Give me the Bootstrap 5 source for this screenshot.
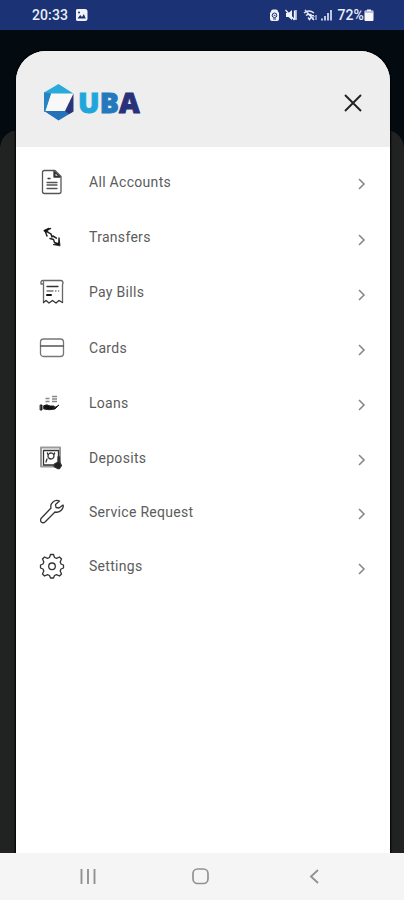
<!DOCTYPE html>
<html lang="en">
<head>
<meta charset="utf-8">
<meta name="viewport" content="width=device-width, initial-scale=1">
<title>UBA Menu</title>
<link rel="stylesheet" href="https://cdn.jsdelivr.net/npm/bootstrap@5.3.0/dist/css/bootstrap.min.css">
<style>
body{font-family:Roboto,"Liberation Sans",sans-serif;background:#202321;letter-spacing:.3px}
.screen{height:900px;background:#202321}
.statusbar{height:30px;background:#1b3274;color:#e9eefb;font-size:14px;font-weight:500;letter-spacing:.1px;padding:0 30px 0 32px}
.backdrop-area{background:radial-gradient(circle at 18px 118px,#202321 17.5px,#030b11 18px) 0 0/18px 118px no-repeat,radial-gradient(circle at 0 118px,#202321 17.5px,#030b11 18px) 100% 0/18px 118px no-repeat,linear-gradient(#030b11 90px,#202321 90px);padding:20.500px 14px 0 16px}
.menu-sheet{border-radius:30px 30px 0 0;background:#fff;box-shadow:0 0 2px 1px #000}
.sheet-head{height:96px;background:#eee;padding:8px 26px 0 27px}
.brand-word{font-family:"Open Sans",sans-serif;font-weight:800;font-size:28.5px;line-height:36px;letter-spacing:.1px;margin:-2px 0 0 4px;-webkit-text-stroke:.9px currentColor}
.c1{color:#1fa7dc}.c2{color:#2478bd}.c3{color:#28317a}
.menu{padding-top:7.900px}
.menu-row{height:55.2px;padding:0 23px 0 22px;background:transparent;color:#5c5c5c;font-size:14px;line-height:20px}
.menu-row:nth-child(n+6){height:54.4px}
.menu-row .label{margin-left:23px}
.menu-row .arrow{margin-top:5px}
.navkeys{height:47px;background:#f5f5f5}
svg{display:block;flex:none}
.ico{fill:none;stroke:#333;stroke-width:1.3;stroke-linejoin:round;stroke-linecap:round}
</style>
</head>
<body>
<div class="screen d-flex flex-column overflow-hidden">
  <header class="statusbar d-flex align-items-center justify-content-between">
    <div class="d-flex align-items-center"><span>20:33</span>
      <svg class="ms-2" width="12" height="12" viewBox="0 0 12 12"><rect x="-.5" width="12" height="12" rx="2.5" fill="#f1f3fb"/><path d="M1.500 9.500 4.200 6 6 8l1.800-3 2 4.500z" fill="#1b3274"/><circle cx="3" cy="3.5" r="1" fill="#1b3274"/></svg>
    </div>
    <div class="d-flex align-items-center">
      <svg width="67" height="14" viewBox="1 0 67 14">
        <path d="M2 3.500Q2 1.500 4 1.500h3q2 0 2 2l1 1.500v6q0 2-2 2H3q-2 0-2-2V5z" fill="#f1f3fb"/><circle cx="5.500" cy="7.300" r="2.300" fill="none" stroke="#1b3274"/><path d="M4.700 7.300h1.700M4 11h3" stroke="#1b3274"/>
        <path d="M17 5h2.500L23 2v10l-3.500-3H17z" fill="#f1f3fb"/><path d="M16.500 2l9 10M25.500 2.500v9M27 2v10" stroke="#f1f3fb" stroke-width="1.300"/>
        <path d="M35 5q5-4 10 0M37 7.500q3-2.500 6 0M39 9.500l1.500 2 1.500-2M36 2l9 10" fill="none" stroke="#e5eafa" stroke-width="1.400"/><path d="M44 12V7m-1.500 1.500L44 7l1.500 1.500M47 7v5" fill="none" stroke="#e5eafa"/>
        <path d="M53 12.500v-2M56 12.500V8M59 12.500V5M62 12.500V2" stroke="#cfd7f0" stroke-width="1.800"/>
      </svg>
      <span>72%</span>
      <svg width="10" height="14" viewBox="0 0 10 14"><path d="M3 2.500V1.500h4v1h1.500q1 0 1 1V12q0 1-1 1h-7q-1 0-1-1V3.500q0-1 1-1z" fill="#f6f7fc"/><path d="M1 4h8" stroke="#8491bd"/></svg>
    </div>
  </header>
  <main class="backdrop-area d-flex flex-column flex-fill">
    <section class="menu-sheet d-flex flex-column flex-fill overflow-hidden">
      <div class="sheet-head d-flex align-items-center justify-content-between">
        <div class="d-flex align-items-center">
          <svg width="31" height="37" viewBox="0 0 31 37"><path d="M15.500 0 30.500 8.500v19L15.500 36.500 1 28V8.500z" fill="#f8f8f8"/><path d="M15.500 0 30.500 9.500H8L2 28 1 27V8.500z" fill="#2aaad8"/><path d="M1 8.500 8 9.500 2 28 1 27z" fill="#2484c3"/><path d="M1 27h21l8.500.5-15 9z" fill="#2472b8"/><path d="M30.500 9.500v18L26 30l-4-3z" fill="#29347b"/></svg>
          <div class="brand-word"><span class="c1">U</span><span class="c2">B</span><span class="c3">A</span></div>
        </div>
        <button class="btn p-0 border-0" aria-label="Close"><svg width="22" height="22" viewBox="0 0 22 22"><path d="M3 3l16 16M19 3 3 19" fill="none" stroke="#222" stroke-width="1.900"/></svg></button>
      </div>
      <nav class="menu d-flex flex-column">
        <a class="menu-row d-flex align-items-center text-decoration-none" href="#"><svg class="ico" width="28" height="28" viewBox="0 0 28 28"><path d="M6.500 2.500H17l6 6v15q0 2-2 2H6.500q-2 0-2-2v-19q0-2 2-2z" stroke="#555"/><path d="M10 10.500h2"/><path d="M9 14.500h10M9 17h10M9 20.500h10" stroke="#555"/><path d="M16 3.500v5.500h6z" fill="#333"/><path d="M17.800 6.500v1h1z" fill="#fff" stroke="#fff" stroke-width=".5"/></svg><span class="label">All Accounts</span><svg class="arrow ms-auto" width="12" height="14" viewBox="0 0 12 14"><path d="M4 2l5 5-5 5" fill="none" stroke="#888" stroke-width="1.600"/></svg></a>
        <a class="menu-row d-flex align-items-center text-decoration-none" href="#"><svg class="ico" width="28" height="28" viewBox="0 0 28 28"><path d="M12.500 5.500L7 7.500l2 5.500M8 8l5 3 1 3M12 15.500l3.500 1 1 3 4 1.500M15 13l4 2.500" stroke="#222" stroke-width="1.500" stroke-dasharray="4 1"/><path d="M6 7.500l5-2.500-.5 2L8 9zM15.500 21.500l5-1.500.5-5.500 1 8z" fill="#111" stroke="#111" stroke-width=".8"/></svg><span class="label">Transfers</span><svg class="arrow ms-auto" width="12" height="14" viewBox="0 0 12 14"><path d="M4 2l5 5-5 5" fill="none" stroke="#888" stroke-width="1.600"/></svg></a>
        <a class="menu-row d-flex align-items-center text-decoration-none" href="#"><svg class="ico" width="28" height="28" viewBox="0 0 28 28"><path d="M5.500 24.500V6H3q-.5-3.500 2-3.500h18q2 0 2 3l-.5 1v18" stroke="#666"/><path d="M5.500 6V3" stroke="#777"/><path d="M5.500 24.500l2.500-2 3 2.500 3.500-2.500 3.500 2.500 3-2.500 3.500 2"/><path d="M9 8.500h11" /><path d="M9 13h6M17.500 13h.5M20.500 13h.2" stroke="#777"/><path d="M9 17h4" stroke="#111" stroke-width="2"/></svg><span class="label">Pay Bills</span><svg class="arrow ms-auto" width="12" height="14" viewBox="0 0 12 14"><path d="M4 2l5 5-5 5" fill="none" stroke="#888" stroke-width="1.600"/></svg></a>
        <a class="menu-row d-flex align-items-center text-decoration-none" href="#"><svg class="ico" width="28" height="28" viewBox="0 0 28 28"><rect x="2.500" y="5" width="23" height="17.500" rx="3" stroke="#777"/><path d="M2.500 12h23" stroke="#555"/></svg><span class="label">Cards</span><svg class="arrow ms-auto" width="12" height="14" viewBox="0 0 12 14"><path d="M4 2l5 5-5 5" fill="none" stroke="#888" stroke-width="1.600"/></svg></a>
        <a class="menu-row d-flex align-items-center text-decoration-none" href="#"><svg class="ico" width="28" height="28" viewBox="0 0 28 28"><path d="M7.500 9.500h4M7.500 12.500h4M14 7.500h5M14 10h5M14 12.500h5" stroke="#888" stroke-linecap="butt"/><path d="M2.500 16h1.500v5H2.500zM6 16.500q3-1.500 6 .5h4q1 1-1 1.500 3 0 6-2.500l-4 4q-6 1.500-11 0z" fill="#111" stroke="#222" stroke-width="1"/></svg><span class="label">Loans</span><svg class="arrow ms-auto" width="12" height="14" viewBox="0 0 12 14"><path d="M4 2l5 5-5 5" fill="none" stroke="#888" stroke-width="1.600"/></svg></a>
        <a class="menu-row d-flex align-items-center text-decoration-none" href="#"><svg class="ico" width="28" height="28" viewBox="0 0 28 28"><path d="M3 3.500h19v19H3z" stroke="#999" stroke-width="2"/><path d="M20.500 17V6.500H5.500V21H16" stroke="#333"/><circle cx="13" cy="12" r="3" stroke-dasharray="3 1"/><path d="M9.500 9v1M16.500 9v1M9 15l-1 3"/><path d="M20 13v5l-3.500 2-.5 2.500 3.500 2h2l2-3-2-3.500v-5z" fill="#222"/></svg><span class="label">Deposits</span><svg class="arrow ms-auto" width="12" height="14" viewBox="0 0 12 14"><path d="M4 2l5 5-5 5" fill="none" stroke="#888" stroke-width="1.600"/></svg></a>
        <a class="menu-row d-flex align-items-center text-decoration-none" href="#"><svg class="ico" width="28" height="28" viewBox="0 0 28 28"><path d="M21.500 3q-3.500-1.500-6.500 1t-2 6L3 20.500q-1 2 .3 3.500 1.700 1.500 3.700 0L17 14q4 1 6.500-2t1.500-5L21 10l-3-.5-.5-3z"/></svg><span class="label">Service Request</span><svg class="arrow ms-auto" width="12" height="14" viewBox="0 0 12 14"><path d="M4 2l5 5-5 5" fill="none" stroke="#888" stroke-width="1.600"/></svg></a>
        <a class="menu-row d-flex align-items-center text-decoration-none" href="#"><svg class="ico" width="28" height="28" viewBox="0 0 28 28"><path d="M12.500 2.500h3l1 3 2 .8 3-1.300 2 2-1.300 3 .8 2 2.500 1v3l-2.500 1-.8 2 1.300 3-2 2-3-1.300-2 .8-1 2.500h-3l-1-2.500-2-.8-3 1.300-2-2 1.300-3-.8-2-2.500-1v-3l2.500-1 .8-2-1.300-3 2-2 3 1.300 2-.8z"/><circle cx="14" cy="14.300" r="3.300"/></svg><span class="label">Settings</span><svg class="arrow ms-auto" width="12" height="14" viewBox="0 0 12 14"><path d="M4 2l5 5-5 5" fill="none" stroke="#888" stroke-width="1.600"/></svg></a>
      </nav>
    </section>
  </main>
  <footer class="navkeys d-flex align-items-center justify-content-between">
    <svg width="404" height="24" viewBox="0 0 404 24"><g fill="none" stroke="#929292"><path d="M81.500 4v15M88 4v15M94.500 4v15" stroke-width="1.900"/><rect x="193" y="4" width="15" height="14.500" rx="4.500" stroke-width="1.700"/><path d="M318 5l-7 6.500 7 6.500" stroke-width="1.900"/></g></svg>
  </footer>
</div>
<script src="https://cdn.jsdelivr.net/npm/bootstrap@5.3.0/dist/js/bootstrap.bundle.min.js"></script>
</body>
</html>
